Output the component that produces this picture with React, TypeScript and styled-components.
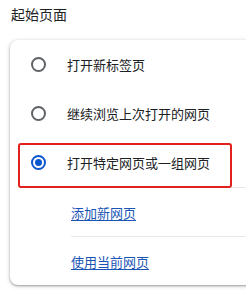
import React from "react";
import styled, { createGlobalStyle } from "styled-components";

const Global = createGlobalStyle`
  html, body { margin: 0; padding: 0; background: #ffffff; overflow: hidden; }
  body { font-family: "Noto Sans CJK SC", "Noto Sans", sans-serif; color: #202124; }
`;

const Page = styled.div`
  width: 246px;
  height: 291px;
  padding: 5px 0 0 11px;
  box-sizing: border-box;
  overflow: hidden;
`;

const Heading = styled.div`
  font-size: 14px;
  line-height: 18px;
  color: #202124;
  height: 35px;
`;

const Card = styled.div`
  position: relative;
  width: 280px;
  margin-left: -1px;
  background: #fff;
  border-radius: 8px;
  box-shadow: 0 1px 2px rgba(0, 0, 0, 0.3), 0 1px 4px 1px rgba(0, 0, 0, 0.12);
  display: flex;
  flex-direction: column;
`;

const Row = styled.label`
  height: 49px;
  display: flex;
  align-items: center;
  padding-left: 21px;
  gap: 21px;
  font-size: 13px;
  color: #202124;
`;

const Radio = styled.span<{ $checked?: boolean }>`
  width: 15px;
  height: 15px;
  box-sizing: border-box;
  border-radius: 50%;
  border: 2px solid ${(p) => (p.$checked ? "#0b57d0" : "#5f6368")};
  display: flex;
  align-items: center;
  justify-content: center;
  flex: none;
  &::after {
    content: "";
    width: 7px;
    height: 7px;
    border-radius: 50%;
    background: #0b57d0;
    display: ${(p) => (p.$checked ? "block" : "none")};
  }
`;

const LinkRow = styled.div<{ $divider?: boolean }>`
  height: 49px;
  margin-left: 61px;
  display: flex;
  align-items: center;
  border-top: 1px solid ${(p) => (p.$divider ? "#e8e8e8" : "transparent")};
  box-sizing: border-box;
`;

const LinkText = styled.a`
  font-size: 13px;
  color: #1a55b5;
  text-decoration: underline;
  text-underline-offset: 2px;
`;

const Highlight = styled.div`
  position: absolute;
  left: 8px;
  top: 103px;
  width: 214px;
  height: 45px;
  box-sizing: border-box;
  border: 2.5px solid #e3211c;
  border-radius: 3px;
  pointer-events: none;
`;

export default function App() {
  return (
    <>
      <Global />
      <Page>
        <Heading>起始页面</Heading>
        <Card>
          <Row>
            <Radio />
            打开新标签页
          </Row>
          <Row>
            <Radio />
            继续浏览上次打开的网页
          </Row>
          <Row>
            <Radio $checked />
            打开特定网页或一组网页
          </Row>
          <LinkRow $divider>
            <LinkText>添加新网页</LinkText>
          </LinkRow>
          <LinkRow $divider>
            <LinkText>使用当前网页</LinkText>
          </LinkRow>
          <Highlight />
        </Card>
      </Page>
    </>
  );
}
